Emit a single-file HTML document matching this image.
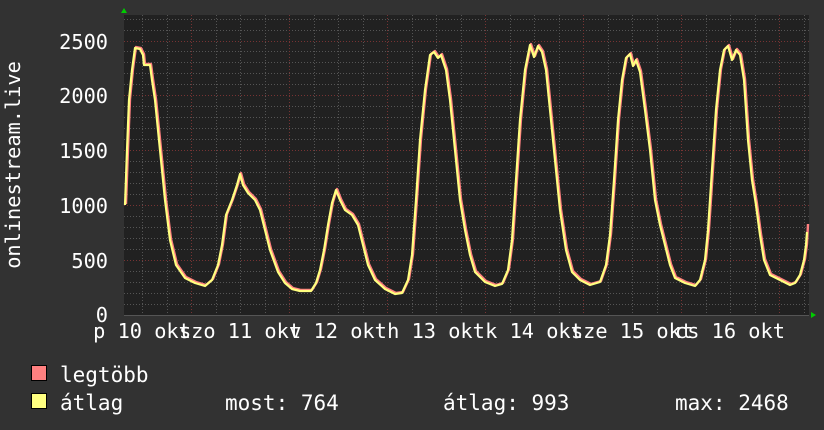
<!DOCTYPE html>
<html><head><meta charset="utf-8"><style>
html,body{margin:0;padding:0;background:#323232;}
svg{display:block}
text{font-family:"DejaVu Sans Mono","Liberation Mono",monospace;font-size:20.3px;fill:#fff}
.lg{font-size:21px}
</style></head><body>
<svg width="824" height="430" viewBox="0 0 824 430" xmlns="http://www.w3.org/2000/svg">
<rect width="824" height="430" fill="#323232"/>
<rect x="124" y="15" width="685" height="300" fill="#212121"/>
<g stroke="#555" stroke-width="1" stroke-dasharray="1,2">
<path d="M124 304.5H809M124 293.5H809M124 282.5H809M124 271.5H809M124 249.5H809M124 238.5H809M124 227.5H809M124 216.5H809M124 194.5H809M124 183.5H809M124 172.5H809M124 161.5H809M124 139.5H809M124 128.5H809M124 117.5H809M124 106.5H809M124 84.5H809M124 73.5H809M124 62.5H809M124 51.5H809M124 30.5H809M124 19.5H809"/>
<path d="M142.5 15V315M167.5 15V315M216.5 15V315M240.5 15V315M265.5 15V315M314.5 15V315M338.5 15V315M363.5 15V315M412.5 15V315M436.5 15V315M461.5 15V315M510.5 15V315M534.5 15V315M559.5 15V315M608.5 15V315M632.5 15V315M657.5 15V315M706.5 15V315M730.5 15V315M755.5 15V315M804.5 15V315"/>
</g>
<g stroke="#733" stroke-width="1" stroke-dasharray="1,2">
<path d="M124 260.5H809M124 205.5H809M124 150.5H809M124 95.5H809M124 41.5H809"/>
<path d="M191.5 15V315M289.5 15V315M387.5 15V315M485.5 15V315M583.5 15V315M681.5 15V315M779.5 15V315"/>
</g>
<path d="M124 315.5H809" stroke="#555" stroke-width="1"/>
<path d="M121 13L124 8L127 13Z" fill="#0c0"/>
<path d="M811 312L816 315L811 318Z" fill="#0c0"/>
<g fill="none" stroke-linejoin="round">
<polyline stroke="#ff8080" stroke-width="2.4" transform="translate(1,-1)" points="125,205 127,150 129,100 132,70 135,48 140,49 143,55 144,65 150,65 152,80 155,100 160,150 165,200 170,240 176,265 185,278 195,283 205,286 212,280 218,265 222,245 226,215 232,200 237,185 240,174 243,185 248,193 255,200 260,210 265,230 270,250 278,272 285,283 292,289 300,291 311,291 316,283 320,270 324,250 328,225 332,203 336,190 340,200 345,210 352,215 358,225 363,245 368,265 375,280 385,289 395,294 402,293 408,280 412,255 416,200 420,140 425,90 430,55 434,52 438,58 441,55 446,70 450,100 455,150 460,200 465,230 470,255 475,272 485,282 495,286 502,284 508,270 512,240 516,180 520,120 525,70 530,45 534,57 538,46 542,52 546,70 550,110 555,160 560,210 566,250 572,272 580,280 590,285 600,282 606,265 610,235 614,180 618,120 622,80 626,58 630,54 633,66 636,60 640,72 645,110 650,150 655,200 660,225 665,245 670,265 675,278 685,283 695,286 700,280 705,260 708,230 712,170 716,110 720,70 724,50 728,46 732,60 736,50 740,55 744,80 748,140 752,180 756,205 760,235 764,260 770,275 780,280 790,285 795,283 800,275 804,260 806,245 807,225"/>
<polyline stroke="#ffff80" stroke-width="2.2" points="125,205 127,150 129,100 132,70 135,48 140,49 143,55 144,65 150,65 152,80 155,100 160,150 165,200 170,240 176,265 185,278 195,283 205,286 212,280 218,265 222,245 226,215 232,200 237,185 240,174 243,185 248,193 255,200 260,210 265,230 270,250 278,272 285,283 292,289 300,291 311,291 316,283 320,270 324,250 328,225 332,203 336,190 340,200 345,210 352,215 358,225 363,245 368,265 375,280 385,289 395,294 402,293 408,280 412,255 416,200 420,140 425,90 430,55 434,52 438,58 441,55 446,70 450,100 455,150 460,200 465,230 470,255 475,272 485,282 495,286 502,284 508,270 512,240 516,180 520,120 525,70 530,45 534,57 538,46 542,52 546,70 550,110 555,160 560,210 566,250 572,272 580,280 590,285 600,282 606,265 610,235 614,180 618,120 622,80 626,58 630,54 633,66 636,60 640,72 645,110 650,150 655,200 660,225 665,245 670,265 675,278 685,283 695,286 700,280 705,260 708,230 712,170 716,110 720,70 724,50 728,46 732,60 736,50 740,55 744,80 748,140 752,180 756,205 760,235 764,260 770,275 780,280 790,285 795,283 800,275 804,260 806,245 807,232"/>
</g>
<g text-anchor="end">
<text x="108" y="49">2500</text>
<text x="108" y="103">2000</text>
<text x="108" y="158">1500</text>
<text x="108" y="213">1000</text>
<text x="108" y="268">500</text>
<text x="108" y="322">0</text>
</g>
<text transform="translate(20,165) rotate(-90)" text-anchor="middle">onlinestream.live</text>
<g text-anchor="middle">
<text x="142" y="338">p 10 okt</text>
<text x="240" y="338">szo 11 okt</text>
<text x="338" y="338">v 12 okt</text>
<text x="436" y="338">h 13 okt</text>
<text x="534" y="338">k 14 okt</text>
<text x="632" y="338">sze 15 okt</text>
<text x="730" y="338">cs 16 okt</text>
</g>
<rect x="31.5" y="365.5" width="15" height="15" fill="#ff8080" stroke="#000"/>
<rect x="31.5" y="393.5" width="15" height="15" fill="#ffff80" stroke="#000"/>
<text class="lg" x="60" y="382">legtöbb</text>
<text class="lg" x="60" y="410">átlag</text>
<text class="lg" x="225" y="410">most: 764</text>
<text class="lg" x="443" y="410">átlag: 993</text>
<text class="lg" x="675" y="410">max: 2468</text>
</svg>
</body></html>
